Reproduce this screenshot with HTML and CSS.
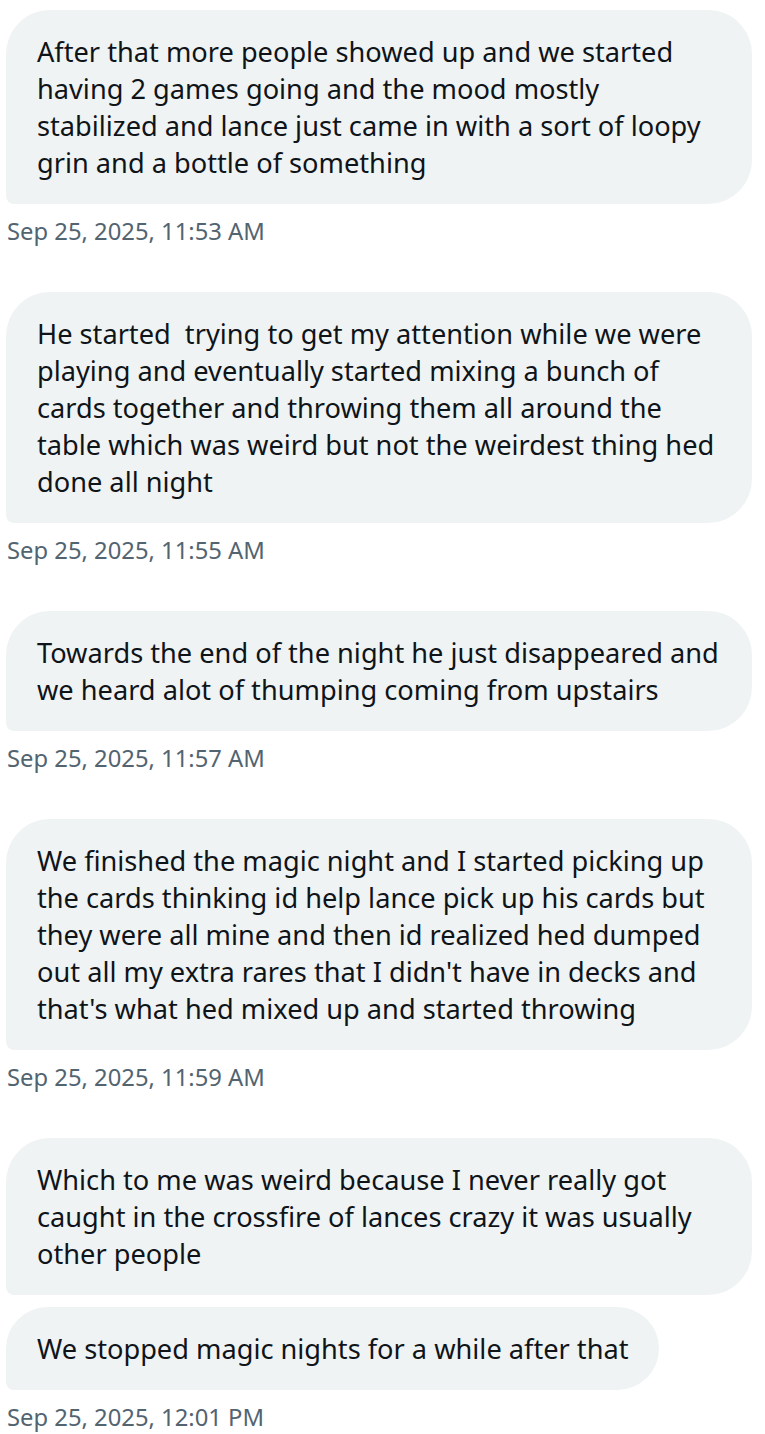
FILE: index.html
```html
<!DOCTYPE html>
<html lang="en">
<head>
<meta charset="utf-8">
<title>Messages</title>
<link rel="stylesheet" href="styles.css">
</head>
<body>
<main class="thread">
  <section class="group">
    <div class="msg">After that more people showed up and we started having 2 games going and the mood mostly stabilized and lance just came in with a sort of loopy grin and a bottle of something</div>
    <div class="time">Sep 25, 2025, 11:53 AM</div>
  </section>
  <section class="group">
    <div class="msg">He started&nbsp; trying to get my attention while we were playing and eventually started mixing a bunch of cards together and throwing them all around the table which was weird but not the weirdest thing hed done all night</div>
    <div class="time">Sep 25, 2025, 11:55 AM</div>
  </section>
  <section class="group">
    <div class="msg">Towards the end of the night he just disappeared and we heard alot of thumping coming from upstairs</div>
    <div class="time">Sep 25, 2025, 11:57 AM</div>
  </section>
  <section class="group">
    <div class="msg">We finished the magic night and I started picking up the cards thinking id help lance pick up his cards but they were all mine and then id realized hed dumped out all my extra rares that I didn't have in decks and that's what hed mixed up and started throwing</div>
    <div class="time">Sep 25, 2025, 11:59 AM</div>
  </section>
  <section class="group">
    <div class="msg">Which to me was weird because I never really got caught in the crossfire of lances crazy it was usually other people</div>
    <div class="msg">We stopped magic nights for a while after that</div>
    <div class="time">Sep 25, 2025, 12:01 PM</div>
  </section>
</main>
</body>
</html>
```

FILE: styles.css
```css
html, body {
  margin: 0;
  padding: 0;
  background: #ffffff;
}

body {
  font-family: "Noto Sans", "Open Sans", "Liberation Sans", sans-serif;
  color: #0f1419;
}

.thread {
  display: flex;
  flex-direction: column;
  gap: 46px;
  padding: 10px 13px 0 6px;
}

.group {
  display: flex;
  flex-direction: column;
  align-items: flex-start;
  gap: 12px;
}

.msg {
  background: #eff3f4;
  border-radius: 44px 44px 44px 8px;
  padding: 23px 30px 23px 31px;
  font-size: 27.2px;
  line-height: 37px;
  max-width: 746px;
  box-sizing: border-box;
  overflow-wrap: break-word;
}

.time {
  font-size: 23.8px;
  line-height: 30px;
  color: #536471;
  padding-left: 1px;
}
```
